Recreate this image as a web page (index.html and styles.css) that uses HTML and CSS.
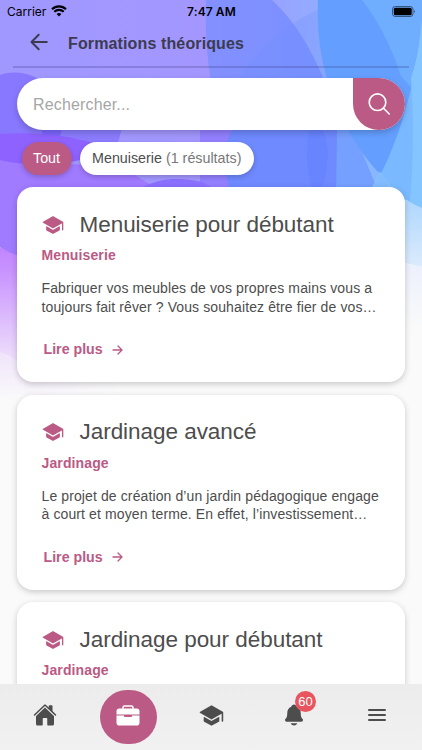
FILE: index.html
```html
<!DOCTYPE html>
<html lang="fr">

<head>
    <meta charset="UTF-8">
    <meta name="viewport" content="width=device-width, initial-scale=1.0">
    <title>Formations théoriques</title>
    <link rel="stylesheet" href="styles.css">
</head>

<body>
    <!-- decorative background -->
    <svg class="background" viewBox="0 0 422 400" aria-hidden="true">
        <defs>
            <linearGradient id="base" x1="0" x2="1" y1="0" y2="0">
                <stop offset="0" stop-color="#a098ff"/>
                <stop offset=".5" stop-color="#a397ff"/>
                <stop offset=".72" stop-color="#94a9ff"/>
                <stop offset="1" stop-color="#80c0ff"/>
            </linearGradient>
            <linearGradient id="pink" x1="0" x2="0" y1="0" y2="1">
                <stop offset="0" stop-color="#c084ff"/>
                <stop offset=".15" stop-color="#c892ff"/>
                <stop offset=".7" stop-color="#ecdafb"/>
                <stop offset="1" stop-color="#fafafa"/>
            </linearGradient>
            <linearGradient id="fade" x1="0" x2="1" y1="0" y2="0">
                <stop offset="0" stop-color="#fafafa" stop-opacity="0"/>
                <stop offset="1" stop-color="#fafafa"/>
            </linearGradient>
            <linearGradient id="petal" x1="0" x2="1" y1="0" y2="0">
                <stop offset="0" stop-color="#8490ff"/>
                <stop offset="1" stop-color="#7890ff"/>
            </linearGradient>
            <linearGradient id="sky" x1="0" x2="0" y1="0" y2="1">
                <stop offset="0" stop-color="#9bcfff"/>
                <stop offset="1" stop-color="#dcebfc"/>
            </linearGradient>
            <linearGradient id="haze" x1="0" x2="0" y1="0" y2="1">
                <stop offset="0" stop-color="#ecf0fd"/>
                <stop offset="1" stop-color="#fafafa"/>
            </linearGradient>
        </defs>
        <rect width="422" height="400" fill="#fafafa"/>
        <rect width="422" height="212" fill="url(#base)"/>
        <!-- right petals -->
        <path d="M206 0H272C296 22 310 48 322 75L345 200H260C220 150 203 75 206 0Z" fill="url(#petal)"/>
        <path d="M335 2C295 18 262 42 240 78L300 100L345 75V2Z" fill="#6a90ff" opacity=".25"/>
        <path d="M200 128H240L232 200H200Z" fill="#937fff"/>
        <path d="M234 128C223 142 222 165 232 200H336L338 128Z" fill="#6f89ff"/>
        <path d="M310 128H322C331 147 329 170 318 200H316C306 175 305 150 310 128Z" fill="#5b7cff" opacity=".35"/>
        <path d="M337 128H352L382 200H336Z" fill="#76a0ff"/>
        <path d="M318 0H422V128C410 160 390 180 378 172C350 142 314 80 318 0Z" fill="#649fff"/>
        <path d="M362 0H422V100L401 76C392 48 378 20 362 0Z" fill="#6eadff"/>
        <path d="M421 0C423 60 402 145 366 200H422Z" fill="#7ab9ff"/>
        <path d="M411 78C413 110 415 150 409 212H422V20C420 45 416 64 411 78Z" fill="#84c5ff"/>
        <path d="M380 172C392 190 405 201 422 208V267L400 262V200H366Z" fill="url(#sky)"/>
        <path d="M380 172L366 200H409L410 201C399 195 389 186 380 172Z" fill="#82bcff"/>
        <path d="M400 262L422 267V330H400Z" fill="url(#haze)"/>
        <!-- left petals -->
        <path d="M0 75C22 68 44 76 58 100C66 120 62 145 50 158H0Z" fill="#8878ff"/>
        <path d="M40 100H124C124 122 121 140 110 160H62C50 145 42 125 40 100Z" fill="#8c7cff"/>
        <path d="M41 128H62C60 138 57 146 52 150C47 145 43 138 41 128Z" fill="#7d66ff"/>
        <path d="M0 160C40 164 90 162 130 172L175 200V262H20L0 247Z" fill="#a07aff"/>
        <path d="M0 134C35 131 80 136 106 148C90 165 30 168 0 160Z" fill="#8d62ff"/>
        <path d="M0 247C6 251 12 254 20 256L120 300V400H0Z" fill="url(#pink)"/>
        <rect x="18" y="300" width="104" height="100" fill="url(#fade)"/>
        <path d="M0 352C10 355 16 360 24 366V400H0Z" fill="#fafafa" opacity=".35"/>
        <path d="M143 187C160 178 180 177 202 182L225 195H143Z" fill="#8b70ff"/>
    </svg>

    <div class="app">
        <div class="status-bar">
            <div class="carrier">
                Carrier
                <svg width="16" height="12" viewBox="0 0 16 12">
                    <path d="M8 11.6L10.4 9.1A3.5 3.5 0 0 0 5.6 9.1Z"/>
                    <path d="M3.3 6.8A6.7 6.7 0 0 1 12.7 6.8M1 4.2A10 10 0 0 1 15 4.2" fill="none" stroke="#000" stroke-width="2.1"/>
                </svg>
            </div>
            <div class="time">7:47 AM</div>
            <svg class="battery" width="24" height="11" viewBox="0 0 24 11">
                <rect x=".5" y=".5" width="20.5" height="10" rx="2.8" fill="none" stroke="#000" stroke-opacity=".5"/>
                <rect x="1.8" y="1.8" width="17.9" height="7.4" rx="1.5"/>
                <path d="M22.3 3.7Q24 5.5 22.3 7.3Z" opacity=".6"/>
            </svg>
        </div>

        <header class="header">
            <svg class="back" width="18" height="18" viewBox="0 0 18 18">
                <path d="M8.7 1.8L1.5 9L8.7 16.2M1.9 9H16.8"/>
            </svg>
            <h1>Formations théoriques</h1>
        </header>

        <div class="search">
            <input type="text" placeholder="Rechercher...">
            <button class="search-btn" aria-label="Rechercher">
                <svg width="24" height="24" viewBox="0 0 24 24">
                    <circle cx="10.5" cy="10.2" r="8.3"/>
                    <path d="M16.5 16.2L22.2 22"/>
                </svg>
            </button>
        </div>

        <div class="chips">
            <div class="chip active">Tout</div>
            <div class="chip">Menuiserie <span>(1 résultats)</span></div>
        </div>

        <main class="list">
            <article class="card">
                <div class="card-title">
                    <svg class="school" viewBox="0 0 512 512"><use href="#school"/></svg>
                    <h2>Menuiserie pour débutant</h2>
                </div>
                <h3>Menuiserie</h3>
                <p>Fabriquer vos meubles de vos propres mains vous a<br>toujours fait rêver ? Vous souhaitez être fier de vos…</p>
                <a class="more">Lire plus <svg width="11" height="10" viewBox="0 0 11 10"><path d="M1 5H9.8M6 1L10 5L6 9"/></svg></a>
            </article>

            <article class="card">
                <div class="card-title">
                    <svg class="school" viewBox="0 0 512 512"><use href="#school"/></svg>
                    <h2>Jardinage avancé</h2>
                </div>
                <h3>Jardinage</h3>
                <p>Le projet de création d’un jardin pédagogique engage<br>à court et moyen terme. En effet, l’investissement…</p>
                <a class="more">Lire plus <svg width="11" height="10" viewBox="0 0 11 10"><path d="M1 5H9.8M6 1L10 5L6 9"/></svg></a>
            </article>

            <article class="card">
                <div class="card-title">
                    <svg class="school" viewBox="0 0 512 512"><use href="#school"/></svg>
                    <h2>Jardinage pour débutant</h2>
                </div>
                <h3>Jardinage</h3>
            </article>
        </main>

        <nav class="tabs">
            <a class="tab">
                <svg width="24" height="24" viewBox="0 0 512 512">
                    <path d="M261.56 101.28a8 8 0 00-11.06 0L66.4 277.15a8 8 0 00-2.47 5.79L63.9 448a32 32 0 0032 32H192a16 16 0 0016-16V328a8 8 0 018-8h80a8 8 0 018 8v136a16 16 0 0016 16h96.06a32 32 0 0032-32V282.94a8 8 0 00-2.47-5.79z"/>
                    <path d="M490.91 244.15l-74.8-71.56V64a16 16 0 00-16-16h-48a16 16 0 00-16 16v32l-57.92-55.38C272.77 35.14 264.71 32 256 32c-8.68 0-16.72 3.14-22.14 8.63l-212.7 203.5c-6.22 6-7 15.87-1.34 22.37A16 16 0 0043 267.56L250.5 69.28a8 8 0 0111.06 0l207.52 198.28a16 16 0 0022.59-.44c6.14-6.36 5.63-16.86-.76-22.97z"/>
                </svg>
            </a>
            <a class="tab">
                <span class="tab-active">
                    <svg width="24" height="21" viewBox="0 0 24 21">
                        <path d="M7 4V2.6Q7 1 8.6 1H15.4Q17 1 17 2.6V4" fill="none" stroke="#fff" stroke-width="1.5"/>
                        <path d="M3.3 3.5H20.7Q23.5 3.5 23.5 6.3V9.5H.5V6.3Q.5 3.5 3.3 3.5Z"/>
                        <path d="M.5 10.6H8V11Q8 12 9 12H15Q16 12 16 11V10.6H23.5V17.7Q23.5 20.5 20.7 20.5H3.3Q.5 20.5.5 17.7Z"/>
                    </svg>
                </span>
            </a>
            <a class="tab">
                <svg width="25" height="25" viewBox="0 0 512 512">
                    <g id="school">
                        <path d="M256 368a16 16 0 01-7.94-2.11L108 285.84a8 8 0 00-12 6.94V368a16 16 0 008.23 14l144 80a16 16 0 0015.54 0l144-80a16 16 0 008.23-14v-75.22a8 8 0 00-12-6.94l-140.06 80.05A16 16 0 01256 368z"/>
                        <path d="M495.92 190.5v-.11a16 16 0 00-8-12.28l-224-128a16 16 0 00-15.88 0l-224 128a16 16 0 000 27.78l224 128a16 16 0 0015.88 0L461 221.28a2 2 0 013 1.74v144.53c0 8.61 6.62 16 15.23 16.43A16 16 0 00496 368V192a14.76 14.76 0 00-.08-1.5z"/>
                    </g>
                </svg>
            </a>
            <a class="tab">
                <span class="bell">
                    <svg width="24" height="24" viewBox="0 0 512 512">
                        <path d="M440.08 341.31c-1.66-2-3.29-4-4.89-5.93-22-26.61-35.31-42.67-35.31-118 0-39-9.33-71-27.72-95-13.56-17.73-31.89-31.18-56.05-41.12a3 3 0 01-.82-.67C306.6 51.49 282.82 32 256 32s-50.59 19.49-59.28 48.56a3.13 3.13 0 01-.81.65c-56.38 23.21-83.78 67.74-83.78 136.14 0 75.36-13.29 91.42-35.31 118-1.6 1.93-3.23 3.89-4.89 5.93a35.16 35.16 0 00-4.65 37.62c6.17 13 19.32 21.07 34.33 21.07H410.5c14.94 0 28-8.06 34.19-21a35.17 35.17 0 00-4.61-37.66zM256 480a80.06 80.06 0 0070.44-42.13 4 4 0 00-3.54-5.87H189.12a4 4 0 00-3.55 5.87A80.06 80.06 0 00256 480z"/>
                    </svg>
                    <span class="badge">60</span>
                </span>
            </a>
            <a class="tab">
                <svg width="18" height="12" viewBox="0 0 18 12">
                    <path d="M1 1H17M1 6H17M1 11H17" stroke="#4d4d4d" stroke-width="2" stroke-linecap="round"/>
                </svg>
            </a>
        </nav>
    </div>
</body>

</html>
```
FILE: styles.css
```css
* {
    box-sizing: border-box;
}

body {
    margin: 0;
    height: 750px;
    overflow: hidden;
    background-color: #fafafa;
    font-family: "Liberation Sans", Arial, sans-serif;
    color: #4d4d4d;
}

h1, h2, h3, p {
    margin: 0;
}

svg {
    display: block;
    flex-shrink: 0;
}

.background {
    position: absolute;
    top: 0;
    left: 0;
    width: 422px;
    height: 400px;
    z-index: -1;
}

.app {
    display: flex;
    flex-direction: column;
    height: 750px;
}

.status-bar {
    display: grid;
    grid-template-columns: 1fr auto 1fr;
    align-items: center;
    height: 22px;
    padding: 0 6px 0 7px;
    font-family: Inter, sans-serif;
    font-size: 12px;
    color: #000;
    flex-shrink: 0;
}

.carrier {
    display: flex;
    align-items: center;
    gap: 5px;
}

.time {
    font-weight: 600;
    letter-spacing: 0.1px;
}

.battery {
    justify-self: end;
}

.header {
    display: flex;
    align-items: center;
    gap: 20px;
    height: 46px;
    margin: 0 13px;
    padding: 0 17px 4px;
    border-bottom: 2px solid rgba(50, 50, 120, 0.24);
    flex-shrink: 0;
}

.header h1 {
    font-size: 16px;
    letter-spacing: 0.13px;
    color: #3c3b50;
    padding-top: 3px;
}

.back {
    fill: none;
    stroke: #3c3b50;
    stroke-width: 2;
    stroke-linecap: round;
    stroke-linejoin: round;
}

.search {
    display: flex;
    height: 52px;
    margin: 10px 17px 0;
    background-color: #fff;
    border-radius: 26px;
    box-shadow: 0 3px 6px rgba(0, 0, 0, 0.2);
    flex-shrink: 0;
}

.search input {
    flex: 1;
    min-width: 0;
    border: none;
    outline: none;
    background: none;
    padding: 2px 16px 0;
    font-family: inherit;
    font-size: 16px;
    letter-spacing: 0.15px;
}

.search input::placeholder {
    color: #a6a6a6;
}

.search-btn {
    display: flex;
    align-items: center;
    justify-content: center;
    width: 52px;
    padding: 0;
    border: none;
    border-radius: 0 26px 26px 26px;
    background-color: #bb5a84;
}

.search-btn svg {
    fill: none;
    stroke: #fff;
    stroke-width: 1.6;
    stroke-linecap: round;
}

.chips {
    display: flex;
    gap: 8px;
    margin: 12px 21.5px 0;
    flex-shrink: 0;
}

.chip {
    height: 33px;
    line-height: 33px;
    padding: 0 12.5px;
    border-radius: 17px;
    background-color: #fff;
    box-shadow: 0 2px 5px rgba(0, 0, 0, 0.2);
    font-size: 14.3px;
    white-space: nowrap;
}

.chip span {
    color: #777;
}

.chip.active {
    padding: 0 11.5px;
    background-color: #bb5a84;
    color: #fff;
}

.list {
    flex: 1;
    min-height: 0;
    overflow: hidden;
    padding: 12px 17px 0;
}

.card {
    height: 195px;
    margin-bottom: 12.5px;
    padding: 23px 24.5px 0;
    background-color: #fff;
    border-radius: 16px;
    box-shadow: 0 2px 6px rgba(0, 0, 0, 0.2);
}

.card-title {
    display: flex;
    align-items: center;
    gap: 16px;
    height: 29px;
}

.card-title h2 {
    font-size: 22.5px;
    font-weight: normal;
    letter-spacing: -0.04px;
    white-space: nowrap;
}

.school {
    width: 22px;
    height: 22px;
    fill: #bb5a84;
}

.card h3 {
    margin-top: 8px;
    font-size: 14px;
    line-height: 17px;
    letter-spacing: 0.12px;
    color: #bb5a84;
}

.card p {
    margin-top: 15px;
    font-size: 14px;
    line-height: 18.5px;
    letter-spacing: 0.11px;
    white-space: nowrap;
}

.more {
    display: flex;
    align-items: center;
    gap: 9px;
    margin: 25px 0 0 2px;
    font-size: 14.2px;
    line-height: 17px;
    font-weight: bold;
    color: #bb5a84;
}

.more svg {
    fill: none;
    stroke: #bb5a84;
    stroke-width: 1.3;
    stroke-linecap: round;
    stroke-linejoin: round;
}

.tabs {
    display: grid;
    grid-template-columns: repeat(5, 83px);
    justify-content: center;
    height: 66px;
    padding-bottom: 4px;
    background: linear-gradient(#ececec, #f1f1f1);
    flex-shrink: 0;
}

.tab {
    display: flex;
    align-items: center;
    justify-content: center;
    fill: #4d4d4d;
}

.tab-active {
    display: flex;
    justify-content: center;
    width: 57px;
    height: 54px;
    margin-top: 4px;
    padding-top: 15px;
    border-radius: 28px;
    background-color: #bb5a84;
    fill: #fff;
}

.bell {
    position: relative;
}

.badge {
    position: absolute;
    top: -12px;
    left: 13px;
    width: 21px;
    height: 21px;
    line-height: 22px;
    border-radius: 50%;
    background-color: #e8555e;
    color: #fff;
    font-size: 13px;
    text-align: center;
}
```
